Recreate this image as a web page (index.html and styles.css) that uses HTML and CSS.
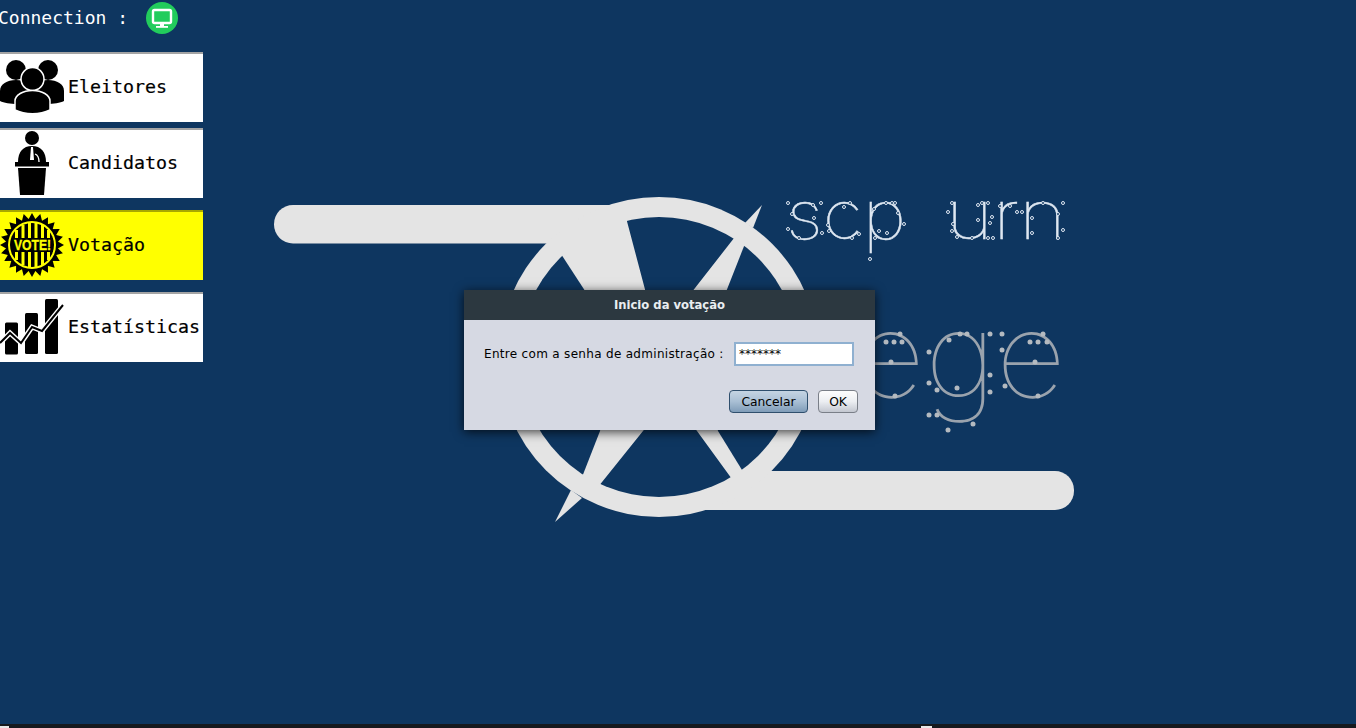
FILE: index.html
```html
<!DOCTYPE html>
<html>
<head>
  <title>SCP URN</title>
  <link rel="stylesheet" href="styles.css">
</head>
<body>
  <div class="desktop">
    <svg class="logo" width="830" height="400" viewBox="260 150 830 400">
      <defs>
        <clipPath id="innerRing"><circle cx="659" cy="357" r="140"/></clipPath>
      </defs>
      <rect class="logo-white" x="274" y="205" width="390" height="38.5" rx="19"/>
      <rect class="logo-white" x="660" y="471" width="414" height="39" rx="19"/>
      <circle class="logo-white" cx="659" cy="357" r="160"/>
      <polygon class="logo-white" points="762,205 745,223 753,228"/>
      <polygon class="logo-white" points="555,522 571,490 582,498"/>
      <g class="logo-blue" clip-path="url(#innerRing)">
        <polygon points="561,254 589,297 617,352 600,431 575,495 440,495 440,254"/>
        <polygon points="624,210 647,297 668,345 688,297 745,224"/>
        <polygon points="750,231 724,297 700,360 718,431 742,470 820,482 820,231"/>
        <polygon points="670,397 643,431 590,497 745,497 697,431"/>
      </g>
      <text class="logo-top" x="786" y="239" textLength="120" lengthAdjust="spacingAndGlyphs">scp</text>
      <text class="logo-top" x="946" y="239" textLength="120" lengthAdjust="spacingAndGlyphs">urn</text>
      <text class="logo-bottom" x="855" y="397" textLength="211" lengthAdjust="spacingAndGlyphs">ege</text>
      <g class="dots-top">
        <circle cx="788" cy="203" r="1.5"/><circle cx="792" cy="214" r="1.5"/><circle cx="814" cy="218" r="1.5"/>
        <circle cx="822" cy="233" r="1.5"/><circle cx="799" cy="238" r="1.5"/><circle cx="788" cy="229" r="1.5"/>
        <circle cx="813" cy="205" r="1.5"/><circle cx="821" cy="203" r="1.5"/><circle cx="844" cy="207" r="1.5"/>
        <circle cx="850" cy="203" r="1.5"/><circle cx="828" cy="225" r="1.5"/><circle cx="829" cy="231" r="1.5"/>
        <circle cx="852" cy="238" r="1.5"/><circle cx="859" cy="234" r="1.5"/><circle cx="886" cy="203" r="1.5"/>
        <circle cx="892" cy="203" r="1.5"/><circle cx="895" cy="203" r="1.5"/><circle cx="874" cy="209" r="1.5"/>
        <circle cx="904" cy="224" r="1.5"/><circle cx="898" cy="213" r="1.5"/><circle cx="887" cy="233" r="1.5"/>
        <circle cx="879" cy="231" r="1.5"/><circle cx="870" cy="259" r="1.5"/><circle cx="875" cy="238" r="1.5"/>
        <circle cx="952" cy="203" r="1.5"/><circle cx="948" cy="212" r="1.5"/><circle cx="953" cy="224" r="1.5"/>
        <circle cx="952" cy="231" r="1.5"/><circle cx="957" cy="237" r="1.5"/><circle cx="972" cy="238" r="1.5"/>
        <circle cx="982" cy="203" r="1.5"/><circle cx="978" cy="205" r="1.5"/><circle cx="978" cy="220" r="1.5"/>
        <circle cx="988" cy="203" r="1.5"/><circle cx="992" cy="217" r="1.5"/><circle cx="990" cy="223" r="1.5"/>
        <circle cx="988" cy="238" r="1.5"/><circle cx="993" cy="238" r="1.5"/><circle cx="1000" cy="206" r="1.5"/>
        <circle cx="1010" cy="206" r="1.5"/><circle cx="1017" cy="212" r="1.5"/><circle cx="1022" cy="212" r="1.5"/>
        <circle cx="1043" cy="203" r="1.5"/><circle cx="1032" cy="218" r="1.5"/><circle cx="1032" cy="233" r="1.5"/>
        <circle cx="1063" cy="203" r="1.5"/><circle cx="1058" cy="214" r="1.5"/><circle cx="1063" cy="230" r="1.5"/>
        <circle cx="1058" cy="238" r="1.5"/>
      </g>
      <g class="dots-bottom">
        <circle cx="900" cy="334" r="2.5"/><circle cx="886" cy="342" r="2.5"/><circle cx="894" cy="342" r="2.5"/>
        <circle cx="902" cy="342" r="2.5"/><circle cx="891" cy="362" r="2.5"/><circle cx="895" cy="396" r="2.5"/>
        <circle cx="949" cy="340" r="2.5"/><circle cx="929" cy="352" r="2.5"/><circle cx="929" cy="383" r="2.5"/>
        <circle cx="937" cy="390" r="2.5"/><circle cx="957" cy="388" r="2.5"/><circle cx="990" cy="375" r="2.5"/>
        <circle cx="990" cy="392" r="2.5"/><circle cx="960" cy="334" r="2.5"/><circle cx="967" cy="334" r="2.5"/>
        <circle cx="990" cy="334" r="2.5"/><circle cx="1002" cy="334" r="2.5"/><circle cx="1002" cy="350" r="2.5"/>
        <circle cx="1043" cy="334" r="2.5"/><circle cx="1030" cy="342" r="2.5"/><circle cx="1038" cy="342" r="2.5"/>
        <circle cx="1047" cy="342" r="2.5"/><circle cx="1035" cy="362" r="2.5"/><circle cx="1005" cy="386" r="2.5"/>
        <circle cx="1038" cy="396" r="2.5"/><circle cx="929" cy="415" r="2.5"/><circle cx="937" cy="415" r="2.5"/>
        <circle cx="948" cy="430" r="2.5"/><circle cx="973" cy="424" r="2.5"/>
      </g>
    </svg>

    <div class="sidebar">
      <div class="connection">
        <span class="connection-label">Connection :</span>
        <svg class="status" width="32" height="32" viewBox="0 0 32 32">
          <circle cx="16" cy="16" r="16" fill="#22cc5c"/>
          <rect x="7" y="8" width="18" height="13" rx="1.5" fill="none" stroke="#fff" stroke-width="2.4"/>
          <rect x="14" y="21" width="4" height="3" fill="#fff"/>
          <rect x="10" y="24" width="12" height="1.8" fill="#fff"/>
        </svg>
      </div>

      <div class="menu-btn first">
        <svg class="menu-icon" width="65" height="68" viewBox="0 54 65 68">
          <circle cx="16" cy="70" r="10"/>
          <circle cx="48" cy="70" r="10"/>
          <path d="M0 101V91C0 84 7 80 16 80C25 80 30 84 30 92V103C18 105 6 104 0 101Z"/>
          <path d="M64 101V91C64 84 57 80 48 80C39 80 34 84 34 92V103C46 105 58 104 64 101Z"/>
          <circle cx="32.5" cy="79" r="11.5" stroke="#fff" stroke-width="1.5"/>
          <path d="M15 110V101C15 95 23 90.500 32.500 90.500C42 90.500 50 95 50 101V110C40 115 25 115 15 110Z" stroke="#fff" stroke-width="1.5"/>
        </svg>
        <span>Eleitores</span>
      </div>

      <div class="menu-btn">
        <svg class="menu-icon" width="65" height="68" viewBox="0 130 65 68">
          <circle cx="32" cy="138" r="7"/>
          <path d="M18 162C18 152 23 146 32 146C41 146 46 152 46 162Z"/>
          <path d="M31 147L30 160H34L33 147Z" fill="#fff"/>
          <path d="M35 154C38 155 39 158 39 162" fill="none" stroke="#fff" stroke-width="1.3"/>
          <rect x="15" y="162" width="34" height="4.500"/>
          <path d="M18 168H46L44 195H20Z"/>
        </svg>
        <span>Candidatos</span>
      </div>

      <div class="menu-btn active">
        <svg class="menu-icon" width="65" height="68" viewBox="-32 -33 65 68">
          <polygon points="-32,0 0,-18 32,0 0,18"/>
          <polygon points="-32,0 0,-18 32,0 0,18" transform="rotate(15)"/>
          <polygon points="-32,0 0,-18 32,0 0,18" transform="rotate(30)"/>
          <polygon points="-32,0 0,-18 32,0 0,18" transform="rotate(45)"/>
          <polygon points="-32,0 0,-18 32,0 0,18" transform="rotate(60)"/>
          <polygon points="-32,0 0,-18 32,0 0,18" transform="rotate(75)"/>
          <polygon points="-32,0 0,-18 32,0 0,18" transform="rotate(90)"/>
          <polygon points="-32,0 0,-18 32,0 0,18" transform="rotate(105)"/>
          <polygon points="-32,0 0,-18 32,0 0,18" transform="rotate(120)"/>
          <polygon points="-32,0 0,-18 32,0 0,18" transform="rotate(135)"/>
          <polygon points="-32,0 0,-18 32,0 0,18" transform="rotate(150)"/>
          <polygon points="-32,0 0,-18 32,0 0,18" transform="rotate(165)"/>
          <circle r="26"/>
          <circle r="24" fill="#ff0"/>
          <circle r="22"/>
          <g fill="#ff0">
            <rect x="-17" y="-15" width="3" height="30"/>
            <rect x="-10.500" y="-20" width="3" height="40"/>
            <rect x="-4" y="-22" width="3" height="44"/>
            <rect x="2.500" y="-22" width="3" height="44"/>
            <rect x="9" y="-20" width="3" height="40"/>
            <rect x="15" y="-15" width="3" height="30"/>
          </g>
          <rect x="-20" y="-7" width="41" height="14"/>
          <text class="vote-text" x="-18" y="5" textLength="37" lengthAdjust="spacingAndGlyphs">VOTE!</text>
        </svg>
        <span>Votação</span>
      </div>

      <div class="menu-btn">
        <svg class="menu-icon" width="65" height="68" viewBox="0 294 65 68">
          <rect x="5" y="322.500" width="13" height="32" rx="1.500"/>
          <rect x="25" y="313" width="13" height="41" rx="1.500"/>
          <rect x="45" y="299" width="13" height="55" rx="1.500"/>
          <polyline points="0,343 10,333 21,343 32,327 42,331 63,305" fill="none" stroke="#fff" stroke-width="5"/>
          <polyline points="0,343 10,333 21,343 32,327 42,331 63,305" fill="none" stroke="#000" stroke-width="2"/>
        </svg>
        <span>Estatísticas</span>
      </div>
    </div>

    <div class="dialog">
      <div class="dialog-title">Inicio da votação</div>
      <div class="dialog-body">
        <div class="password-row">
          <span class="password-label">Entre com a senha de administração :</span>
          <div class="password-field">*******</div>
        </div>
        <div class="dialog-buttons">
          <button class="btn btn-cancel">Cancelar</button>
          <button class="btn btn-ok">OK</button>
        </div>
      </div>
    </div>
  </div>
  <div class="taskbar">
    <span class="task-mark"></span>
    <span class="task-mark task-mark-right"></span>
  </div>
</body>
</html>
```

FILE: styles.css
```css
html, body {
  height: 100%;
}
body {
  margin: 0;
  display: flex;
  flex-direction: column;
  overflow: hidden;
  background-color: #0e3660;
  font-family: "DejaVu Sans", sans-serif;
}
.desktop {
  flex: 1;
  position: relative;
}
.taskbar {
  height: 4px;
  display: flex;
  align-items: flex-end;
  background-color: #16191e;
}
.task-mark {
  width: 9px;
  height: 2px;
  background-color: #e8e8e8;
}
.task-mark-right {
  margin-left: 912px;
  width: 11px;
}

/* logo */
.logo {
  position: absolute;
  left: 260px;
  top: 150px;
}
.logo-white {
  fill: #e4e4e4;
}
.logo-blue {
  fill: #0e3660;
}
.logo-top, .logo-bottom {
  font-family: Inter, sans-serif;
  font-weight: 100;
}
.logo-top {
  font-size: 68px;
  fill: #dfe8f2;
  stroke: #dfe8f2;
  stroke-width: 0.4;
}
.logo-bottom {
  font-size: 118px;
  fill: #9aa3ad;
}
.dots-top {
  fill: #0e3660;
  stroke: #dfe8f2;
  stroke-width: 1;
}
.dots-bottom {
  fill: #b4bac0;
}

/* left menu */
.sidebar {
  width: 203px;
  display: flex;
  flex-direction: column;
}
.connection {
  height: 36px;
  margin-bottom: 16px;
  display: flex;
  align-items: center;
  color: #fff;
  font-family: "DejaVu Sans Mono", monospace;
  font-size: 18px;
}
.connection-label {
  margin-left: -2px;
  margin-bottom: 2px;
  white-space: nowrap;
}
.status {
  margin-left: 18px;
}
.menu-btn {
  height: 68px;
  margin-top: 12px;
  display: flex;
  align-items: center;
  gap: 3px;
  background-color: #fff;
  border-top: 2px solid #a4a4a4;
  color: #000;
  font-family: "DejaVu Sans Mono", monospace;
  font-size: 18.3px;
  white-space: nowrap;
}
.menu-btn span {
  margin-bottom: 4px;
  -webkit-text-stroke: 0.2px #000;
}
.menu-btn.first {
  margin-top: 0;
}
.menu-btn.first + .menu-btn {
  margin-top: 6px;
}
.menu-btn.active {
  background-color: #ff0;
  border-top-color: #a8a800;
}
.menu-icon {
  flex: none;
}
.vote-text {
  font-family: "Liberation Sans", sans-serif;
  font-weight: bold;
  font-size: 14px;
  fill: #ff0;
  stroke: #ff0;
  stroke-width: 0.3;
}

/* password dialog */
.dialog {
  position: absolute;
  left: 464px;
  top: 290px;
  width: 411px;
  height: 140px;
  display: flex;
  flex-direction: column;
  background-color: #d6d9e3;
  box-shadow: 0 2px 10px rgba(0, 0, 0, 0.75);
}
.dialog-title {
  height: 30px;
  line-height: 30px;
  text-align: center;
  background-color: #2c3840;
  color: #e9edf0;
  font-size: 11.6px;
  font-weight: bold;
}
.dialog-body {
  flex: 1;
  display: flex;
  flex-direction: column;
  padding: 22px 17px 17px 20px;
}
.password-row {
  display: flex;
  align-items: center;
  justify-content: space-between;
  padding-right: 4px;
  font-size: 12px;
  color: #000;
}
.password-label {
  letter-spacing: 0.31px;
}
.password-field {
  width: 120px;
  height: 24px;
  line-height: 20px;
  box-sizing: border-box;
  padding-left: 3px;
  background-color: #fff;
  border: 2px solid #8fb0d0;
  font-size: 12px;
}
.dialog-buttons {
  margin-top: auto;
  display: flex;
  justify-content: flex-end;
  gap: 10px;
}
.btn {
  height: 23px;
  padding: 0;
  border-radius: 4px;
  font-family: "DejaVu Sans", sans-serif;
  font-size: 12.3px;
  color: #000;
}
.btn-cancel {
  width: 79px;
  border: 1px solid #2f4f6d;
  background: linear-gradient(#c5d4e3, #a9bfd4 50%, #7f9cb8);
}
.btn-ok {
  width: 40px;
  border: 1px solid #7a7f88;
  background: linear-gradient(#fdfdfd, #eceef2 50%, #c3c7d0);
}
```
